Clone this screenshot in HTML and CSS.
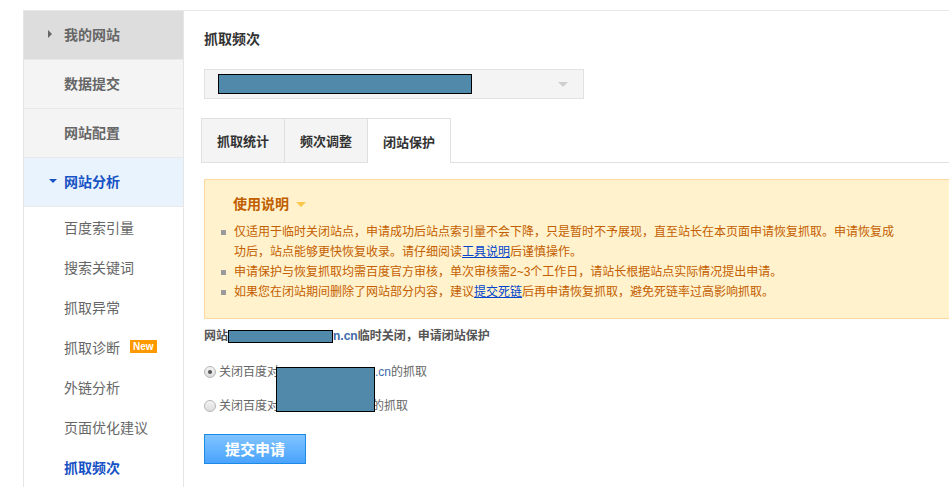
FILE: index.html
```html
<!DOCTYPE html>
<html lang="zh-CN">
<head>
<meta charset="utf-8">
<title>抓取频次</title>
<link rel="stylesheet" href="styles.css">
</head>
<body>
<div class="page">
  <aside class="sidebar">
    <ul class="nav">
      <li class="nav-item mine"><span class="caret caret-right"></span>我的网站</li>
      <li class="nav-item plain">数据提交</li>
      <li class="nav-item plain">网站配置</li>
      <li class="nav-item active"><span class="caret caret-down"></span>网站分析</li>
    </ul>
    <ul class="sub">
      <li>百度索引量</li>
      <li>搜索关键词</li>
      <li>抓取异常</li>
      <li>抓取诊断<span class="badge">New</span></li>
      <li>外链分析</li>
      <li>页面优化建议</li>
      <li class="current">抓取频次</li>
    </ul>
  </aside>
  <main class="main">
    <h1 class="title">抓取频次</h1>
    <div class="select">
      <span class="redact redact-select"></span>
      <span class="select-arrow"></span>
    </div>
    <div class="tabs">
      <div class="tab">抓取统计</div>
      <div class="tab">频次调整</div>
      <div class="tab tab-active">闭站保护</div>
      <div class="tab-rest"></div>
    </div>
    <div class="notice">
      <div class="notice-title">使用说明<span class="notice-caret"></span></div>
      <ul class="notice-list">
        <li>仅适用于临时关闭站点，申请成功后站点索引量不会下降，只是暂时不予展现，直至站长在本页面申请恢复抓取。申请恢复成功后，站点能够更快恢复收录。请仔细阅读<a href="#">工具说明</a>后谨慎操作。</li>
        <li>申请保护与恢复抓取均需百度官方审核，单次审核需2~3个工作日，请站长根据站点实际情况提出申请。</li>
        <li>如果您在闭站期间删除了网站部分内容，建议<a href="#">提交死链</a>后再申请恢复抓取，避免死链率过高影响抓取。</li>
      </ul>
    </div>
    <p class="closing">网站<span class="redact redact-inline"></span><span class="domain">n.cn</span>临时关闭，申请闭站保护</p>
    <div class="radios">
      <label class="radio-row"><span class="radio checked"></span>关闭百度对<span class="gap gap1"></span><span class="domain">.cn</span>的抓取</label>
      <label class="radio-row"><span class="radio"></span>关闭百度对<span class="gap gap2"></span>的抓取</label>
      <span class="redact redact-radios"></span>
    </div>
    <button class="submit" type="button">提交申请</button>
  </main>
</div>
</body>
</html>
```
FILE: styles.css
```css
* { box-sizing: border-box; }
html, body { margin: 0; padding: 0; background: #fff; }
body {
  font-family: "Liberation Sans", "Noto Sans CJK SC", sans-serif;
  font-size: 12px;
  color: #666;
  overflow: hidden;
}
ul { list-style: none; margin: 0; padding: 0; }

.page {
  display: flex;
  margin: 10px 0 0 23px;
  border-top: 1px solid #e8e8e8;
  height: 477px;
}

/* Sidebar */
.sidebar {
  width: 161px;
  flex: none;
  border-left: 1px solid #e5e5e5;
  border-right: 1px solid #e5e5e5;
}
.nav-item {
  height: 49px;
  border-bottom: 1px solid #e9e9e9;
  display: flex;
  align-items: center;
  padding-left: 40px;
  padding-bottom: 2px;
  font-size: 14px;
  font-weight: bold;
  color: #666;
  background: #f4f4f4;
}
.nav-item.mine { background: #dddddd; padding-left: 24px; }
.nav-item.active { background: #e9f3fd; color: #1652c4; padding-left: 24px; }
.caret { width: 16px; height: 10px; position: relative; flex: none; }
.caret-right::before {
  content: "";
  position: absolute;
  left: 0; top: 1px;
  border-left: 4px solid #666;
  border-top: 4px solid transparent;
  border-bottom: 4px solid transparent;
}
.caret-down::before {
  content: "";
  position: absolute;
  left: 1px; top: 3px;
  border-top: 4px solid #1652c4;
  border-left: 4px solid transparent;
  border-right: 4px solid transparent;
}
.sub li {
  height: 40px;
  display: flex;
  align-items: center;
  padding-left: 40px;
  padding-bottom: 1px;
  font-size: 14px;
  color: #666;
}
.sub li.current { color: #1652c4; font-weight: bold; }
.badge {
  margin-left: 10px;
  background: #ff9900;
  color: #fff;
  font-size: 10px;
  font-weight: bold;
  line-height: 13px;
  height: 13px;
  padding: 0 3px;
  font-family: "Liberation Sans", sans-serif;
}

/* Main */
.main {
  flex: 1;
  min-width: 0;
  padding-left: 20px;
  overflow: hidden;
}
.title {
  margin: 18px 0 0;
  font-size: 14px;
  line-height: 20px;
  font-weight: bold;
  color: #333;
}
.select {
  margin-top: 20px;
  width: 380px;
  height: 30px;
  background: #f4f4f4;
  border: 1px solid #e2e2e2;
  display: flex;
  align-items: center;
  padding-left: 13px;
  position: relative;
}
.redact {
  display: inline-block;
  background: #5189aa;
  border: 1px solid #000;
}
.redact-select { width: 254px; height: 20px; }
.select-arrow {
  position: absolute;
  right: 15px;
  top: 12px;
  border-top: 5px solid #cfcfcf;
  border-left: 5px solid transparent;
  border-right: 5px solid transparent;
}

.tabs {
  display: flex;
  margin: 19px 0 0 -3px;
  height: 45px;
}
.tab {
  width: 83px;
  border: 1px solid #e0e0e0;
  border-right: none;
  background: #f4f4f4;
  display: flex;
  align-items: center;
  justify-content: center;
  font-size: 13px;
  font-weight: bold;
  color: #333;
}
.tab-active {
  width: 84px;
  background: #fff;
  border-right: 1px solid #e0e0e0;
  border-bottom: none;
}
.tab-rest { flex: 1; border-bottom: 1px solid #e0e0e0; }

.notice {
  margin-top: 16px;
  width: 780px;
  background: #fff2cc;
  border: 1px solid #fdd8a2;
  padding: 14px 0 16px 16px;
  color: #c45e00;
}
.notice-title {
  padding-left: 12px;
  font-size: 14px;
  font-weight: bold;
  line-height: 20px;
  color: #c05e00;
  display: flex;
  align-items: center;
}
.notice-caret {
  margin-left: 7px;
  border-top: 5px solid #fbc84c;
  border-left: 5px solid transparent;
  border-right: 5px solid transparent;
}
.notice-list {
  margin-top: 8px;
  width: 675px;
}
.notice-list li {
  position: relative;
  padding-left: 13px;
  font-size: 12px;
  line-height: 20px;
}
.notice-list li::before {
  content: "";
  position: absolute;
  left: 0;
  top: 8px;
  width: 5px;
  height: 5px;
  background: #9a9a9a;
}
.notice-list a { color: #0044cc; text-decoration: underline; }

.closing {
  margin: 7px 0 0;
  line-height: 20px;
  font-weight: bold;
  color: #555;
  display: flex;
  align-items: center;
}
.redact-inline { width: 105px; height: 13px; }
.domain { color: #3d6aa8; font-weight: normal; }
.closing .domain { font-weight: bold; }

.radios {
  position: relative;
  margin-top: 16px;
}
.radio-row {
  display: flex;
  align-items: center;
  line-height: 20px;
  color: #666;
}
.radio-row + .radio-row { margin-top: 14px; }
.radio {
  width: 12px;
  height: 12px;
  border-radius: 50%;
  border: 1px solid #b5b5b5;
  background: linear-gradient(#f4f4f4, #dcdcdc);
  margin-right: 3px;
  position: relative;
  flex: none;
}
.radio.checked::after {
  content: "";
  position: absolute;
  left: 3px; top: 3px;
  width: 4px; height: 4px;
  border-radius: 50%;
  background: #555;
}
.gap { display: inline-block; }
.gap1 { width: 96px; }
.gap2 { width: 93px; }
.redact-radios {
  position: absolute;
  left: 72px;
  top: 5px;
  width: 99px;
  height: 45px;
}

.submit {
  margin-top: 18px;
  width: 102px;
  height: 30px;
  border: 1px solid #1d8ae6;
  background: linear-gradient(#80c4ff, #4aa3fd);
  color: #fff;
  font-family: "Liberation Sans", "Noto Sans CJK SC", sans-serif;
  font-size: 15px;
  font-weight: bold;
  padding: 0 0 1px;
  display: block;
}
```
